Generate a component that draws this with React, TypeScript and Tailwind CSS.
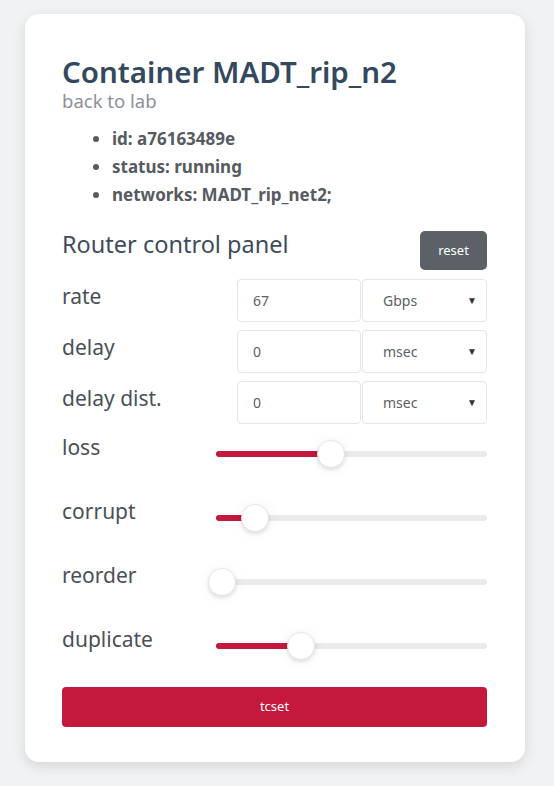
import React from 'react';

const font = { fontFamily: '"Noto Sans", "Open Sans", sans-serif' };

function Slider({ thumb }: { thumb: number }) {
  // thumb = center x offset inside the track (px)
  return (
    <div className="relative h-[6px] w-[271px] rounded-full bg-[#e9eaec]">
      <div className="absolute left-0 top-0 h-[6px] rounded-full bg-[#c4193c]" style={{ width: Math.max(thumb - 10, 0) }} />
      <div
        className="absolute top-[-11px] h-[28px] w-[28px] rounded-full bg-white border border-[#e6e7e9] shadow-[0_2px_4px_rgba(0,0,0,0.12),0_0_18px_rgba(0,0,0,0.04)]"
        style={{ left: thumb - 14 }}
      />
    </div>
  );
}

export default function App() {
  const inputs = [
    { label: 'rate', value: '67', unit: 'Gbps' },
    { label: 'delay', value: '0', unit: 'msec' },
    { label: 'delay dist.', value: '0', unit: 'msec' },
  ];
  const sliders = [
    { label: 'loss', thumb: 115 },
    { label: 'corrupt', thumb: 39 },
    { label: 'reorder', thumb: 6 },
    { label: 'duplicate', thumb: 85 },
  ];

  return (
    <div className="min-h-[786px] w-[554px] bg-[#f1f2f4] pt-[14px] pl-[25px]" style={font}>
      <div className="w-[500px] h-[748px] rounded-[14px] bg-white shadow-[0_4px_14px_rgba(0,0,0,0.12)] pt-[40px] pl-[37px] pr-[38px]">
        <h1 className="text-[29.5px] leading-[36px] font-semibold text-[#35495e]">Container MADT_rip_n2</h1>
        <div className="text-[18.5px] leading-[22px] text-[#8c9299]">back to lab</div>

        <ul className="mt-[13px] pl-[50px] list-disc text-[17px] leading-[28px] font-bold text-[#555b61] marker:text-[#555b61]">
          <li>id: a76163489e</li>
          <li>status: running</li>
          <li>networks: MADT_rip_net2;</li>
        </ul>

        <div className="mt-[20px] flex items-start justify-between">
          <div className="text-[23.5px] leading-[28px] text-[#3f4c5c] pt-[1px]">Router control panel</div>
          <button className="mt-[2px] h-[39px] w-[67px] rounded-[5px] bg-[#5b6167] text-white text-[13px]">reset</button>
        </div>

        <div className="mt-[9px] flex flex-col gap-[8px]">
          {inputs.map((r, i) => (
            <div key={i} className="flex items-start">
              <div className="w-[175px] text-[21px] leading-[26px] text-[#4a5057] pt-[4px]">{r.label}</div>
              <div className="h-[43px] w-[124px] rounded-[4px] border border-[#e3e5e8] flex items-center pl-[15px] text-[14px] text-[#5a5f66]">
                {r.value}
              </div>
              <div className="ml-[1px] h-[43px] w-[125px] rounded-[4px] border border-[#e3e5e8] flex items-center justify-between pl-[20px] pr-[9px] text-[14px] text-[#5a5f66]">
                <span>{r.unit}</span>
                <span className="text-[10px] text-[#333]">▼</span>
              </div>
            </div>
          ))}
        </div>

        <div className="mt-[13px] flex flex-col">
          {sliders.map((s, i) => (
            <div key={i} className="flex items-center h-[64px] pb-[30px]">
              <div className="w-[154px] text-[21px] leading-[26px] text-[#4a5057] mt-[-14px]">{s.label}</div>
              <Slider thumb={s.thumb} />
            </div>
          ))}
        </div>

        <button className="mt-[-10px] h-[40px] w-full rounded-[4px] bg-[#c4193c] text-white text-[13px]">tcset</button>
      </div>
    </div>
  );
}
